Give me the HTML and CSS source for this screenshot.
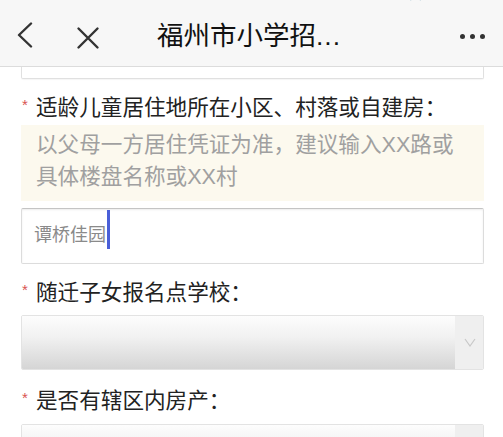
FILE: index.html
```html
<!DOCTYPE html>
<html lang="zh-CN">
<head>
<meta charset="utf-8">
<title>福州市小学招生</title>
<link rel="stylesheet" href="styles.css">
</head>
<body>
<div class="status">
  <div class="status-line">
    <span class="st-left">●●●●○ 中国联通 4G</span>
    <span class="st-mid">下午4:26</span>
    <span class="st-right">@ ◐ 1 ⏰ 99% <span class="battery"></span></span>
  </div>
</div>
<header class="nav">
  <button class="nav-btn back" aria-label="返回">
    <svg width="18" height="26" viewBox="0 0 18 26"><path d="M15 1.5 L3 13 L15 24.5" fill="none" stroke="#333" stroke-width="2.4" stroke-linecap="round" stroke-linejoin="round"/></svg>
  </button>
  <button class="nav-btn close" aria-label="关闭">
    <svg width="24" height="24" viewBox="0 0 24 24"><path d="M2.5 2.5 L21.5 21.5 M21.5 2.5 L2.5 21.5" fill="none" stroke="#333" stroke-width="2.4" stroke-linecap="round"/></svg>
  </button>
  <h1 class="title">福州市小学招<span class="ellipsis">...</span></h1>
  <div class="more" aria-label="更多"><span></span><span></span><span></span></div>
</header>
<main class="form">
  <div class="prev-input"></div>

  <div class="label label-first"><span class="req">*</span>适龄儿童居住地所在小区、村落或自建房：</div>
  <div class="hint">以父母一方居住凭证为准，建议输入XX路或具体楼盘名称或XX村</div>
  <div class="input"><span class="value">谭桥佳园</span><span class="caret"></span></div>

  <div class="label"><span class="req">*</span>随迁子女报名点学校：</div>
  <div class="select">
    <div class="select-field"></div>
    <div class="select-arrow"><svg width="12" height="9" viewBox="0 0 12 9"><path d="M1 1 L6 8 L11 1" fill="none" stroke="#c8c8c8" stroke-width="1.2"/></svg></div>
  </div>

  <div class="label label-third"><span class="req">*</span>是否有辖区内房产：</div>
  <div class="select select-last">
    <div class="select-field"></div>
    <div class="select-arrow"><svg width="12" height="9" viewBox="0 0 12 9"><path d="M1 1 L6 8 L11 1" fill="none" stroke="#c8c8c8" stroke-width="1.2"/></svg></div>
  </div>
</main>
</body>
</html>
```

FILE: styles.css
```css
* { box-sizing: border-box; }
html, body {
  margin: 0;
  padding: 0;
  background: #ffffff;
  font-family: "Liberation Sans", "Noto Sans CJK SC", "Noto Sans", sans-serif;
  color: #222;
  overflow: hidden;
}

.status {
  height: 4px;
  overflow: hidden;
  background: #f7f7f7;
}
.status-line {
  display: flex;
  justify-content: space-between;
  align-items: flex-end;
  height: 22px;
  margin-top: -19px;
  padding: 0 8px 0 6px;
  font-size: 17px;
  line-height: 22px;
  color: #222;
}
.st-mid { margin-left: 70px; }
.battery {
  display: inline-block;
  width: 26px;
  height: 12px;
  border: 1px solid #444;
  border-radius: 2px;
  vertical-align: -1px;
}

.nav {
  height: 63px;
  background: #f7f7f7;
  border-bottom: 1px solid #dcdcdc;
  display: flex;
  align-items: center;
  padding-bottom: 2px;
}
.nav-btn {
  border: 0;
  background: none;
  padding: 0;
  display: flex;
  align-items: center;
}
.back { margin-left: 16px; margin-top: 2px; }
.close { margin-left: 42px; margin-top: 8px; }
.title {
  margin: 3px 0 0 57px;
  font-size: 26.5px;
  font-weight: 400;
  color: #111;
  line-height: 34px;
  white-space: nowrap;
}
.ellipsis { letter-spacing: 1px; }
.more {
  margin-left: auto;
  margin-right: 18px;
  margin-top: 4px;
  display: flex;
  gap: 5px;
}
.more span {
  width: 5px;
  height: 5px;
  border-radius: 50%;
  background: #333;
}

.form {
  padding: 0 19px 0 21px;
}
.prev-input {
  height: 12px;
  border: 1px solid #e0e0e0;
  border-top: 0;
  border-radius: 0 0 2px 2px;
  box-shadow: 0 1px 1px rgba(0,0,0,0.04);
}

.label {
  position: relative;
  padding-left: 15px;
  font-size: 21.6px;
  line-height: 24px;
  color: #222;
  margin-top: 17px;
  white-space: nowrap;
}
.label-first { margin-top: 17px; }
.label-third { margin-top: 19px; }
.req {
  position: absolute;
  left: 1px;
  top: -3px;
  font-size: 15px;
  color: #d9534f;
}

.hint {
  margin-top: 5px;
  background: #fcf9ee;
  padding: 4px 24px 8px 15px;
  font-size: 21.6px;
  line-height: 32px;
  color: #a0a0a0;
  height: 76px;
}

.input {
  margin-top: 7px;
  height: 56px;
  border: 1px solid #dcdcdc;
  border-top-color: #c4c4c4;
  box-shadow: inset 0 1px 2px rgba(0,0,0,0.08);
  border-radius: 2px;
  display: flex;
  align-items: center;
  padding-left: 12px;
  padding-bottom: 2px;
  position: relative;
}
.value {
  font-size: 18px;
  color: #8a8a8a;
  line-height: 24px;
}
.caret {
  position: absolute;
  left: 85px;
  top: 1px;
  width: 3px;
  height: 39px;
  background: #4a5fd8;
}

.select {
  margin-top: 10px;
  height: 55px;
  display: flex;
  border: 1px solid #e3e3e3;
  border-radius: 2px;
  overflow: hidden;
}
.select-last { margin-top: 11px; }
.select-field {
  flex: 1;
  background: linear-gradient(to bottom, #fdfdfd 0%, #f1f1f1 40%, #d5d5d5 100%);
}
.select-arrow {
  width: 28px;
  background: #efefef;
  display: flex;
  align-items: center;
  justify-content: center;
  padding-left: 2px;
}
```
